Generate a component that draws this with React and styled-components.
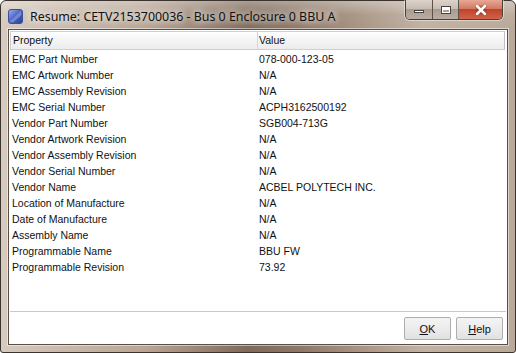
import React from "react";
import styled, { createGlobalStyle } from "styled-components";

const GlobalStyle = createGlobalStyle`
  html, body {
    margin: 0;
    padding: 0;
    background: #ffffff;
  }
  * { box-sizing: border-box; }
`;

const rows = [
  ["EMC Part Number", "078-000-123-05"],
  ["EMC Artwork Number", "N/A"],
  ["EMC Assembly Revision", "N/A"],
  ["EMC Serial Number", "ACPH3162500192"],
  ["Vendor Part Number", "SGB004-713G"],
  ["Vendor Artwork Revision", "N/A"],
  ["Vendor Assembly Revision", "N/A"],
  ["Vendor Serial Number", "N/A"],
  ["Vendor Name", "ACBEL POLYTECH INC."],
  ["Location of Manufacture", "N/A"],
  ["Date of Manufacture", "N/A"],
  ["Assembly Name", "N/A"],
  ["Programmable Name", "BBU FW"],
  ["Programmable Revision", "73.92"],
];

function WindowIcon() {
  return (
    <svg width="15" height="15" viewBox="0 0 15 15">
      <defs>
        <linearGradient id="ig" x1="0" y1="0" x2="1" y2="1">
          <stop offset="0" stopColor="#9fb4ea" />
          <stop offset="0.5" stopColor="#4a63c4" />
          <stop offset="1" stopColor="#2a3f9c" />
        </linearGradient>
      </defs>
      <rect x="0.5" y="0.5" width="14" height="14" rx="2.5" fill="url(#ig)" stroke="#3b4f9a" />
      <path d="M1.5 13 L13 1.8 L13.5 6 L5 13.5 Z" fill="#ffffff" opacity="0.25" />
    </svg>
  );
}

function ScreenDialog() {
  return (
    <Frame>
      <TitleBar>
        <TitleLeft>
          <WindowIcon />
          <Title>Resume: CETV2153700036 - Bus 0 Enclosure 0 BBU A</Title>
        </TitleLeft>
        <Controls>
          <CtlButton $w={27}>
            <MinGlyph />
          </CtlButton>
          <CtlButton $w={26}>
            <MaxGlyph />
          </CtlButton>
          <CloseButton>
            <svg width="12" height="10" viewBox="0 0 12 10">
              <path d="M2 1 L10 9 M10 1 L2 9" stroke="#ffffff" strokeWidth="2.6" strokeLinecap="round" />
            </svg>
          </CloseButton>
        </Controls>
      </TitleBar>
      <Client>
        <TablePane>
          <HeaderRow>
            <HeadCell $first>Property</HeadCell>
            <HeadCell>Value</HeadCell>
          </HeaderRow>
          <Rows>
            {rows.map(([k, v]) => (
              <Row key={k}>
                <Cell $first>{k}</Cell>
                <Cell>{v}</Cell>
              </Row>
            ))}
          </Rows>
        </TablePane>
        <ButtonBar>
          <DlgButton>
            <u>O</u>K
          </DlgButton>
          <DlgButton>
            <u>H</u>elp
          </DlgButton>
        </ButtonBar>
      </Client>
    </Frame>
  );
}

const Frame = styled.div`
  width: 516px;
  height: 353px;
  display: flex;
  flex-direction: column;
  padding: 0 7px 7px 7px;
  border: 1px solid #3b342e;
  border-radius: 6px 6px 3px 3px;
  background:
    linear-gradient(180deg, rgba(255,255,255,0.35) 0px, rgba(255,255,255,0.05) 14px, rgba(0,0,0,0) 28px),
    linear-gradient(90deg, #d6cbc0 0%, #cbbcae 10%, #b8a595 28%, #7e6a5a 48%, #8d7867 58%, #a89585 70%, #c2b2a3 82%, #b9a999 100%);
`;

const TitleBar = styled.div`
  height: 28px;
  display: flex;
  align-items: flex-start;
  justify-content: space-between;
`;

const TitleLeft = styled.div`
  display: flex;
  align-items: center;
  gap: 7px;
  padding-top: 7px;
`;

const Title = styled.span`
  font-family: "Noto Sans", "Open Sans", sans-serif;
  font-size: 12.4px;
  color: #111;
  text-shadow: 0 0 6px rgba(255,255,255,0.95), 0 0 10px rgba(255,255,255,0.8);
  white-space: nowrap;
`;

const Controls = styled.div`
  display: flex;
  margin-top: -1px;
  margin-right: 5px;
  border: 1px solid #4a3f37;
  border-top: none;
  border-radius: 0 0 5px 5px;
  overflow: hidden;
  box-shadow: 0 0 0 1px rgba(255,255,255,0.45);
`;

const CtlButton = styled.div`
  width: ${(p) => p.$w}px;
  height: 19px;
  display: flex;
  align-items: center;
  justify-content: center;
  border-right: 1px solid #5e5249;
  background: linear-gradient(180deg, #dcd3cb 0%, #c8bdb2 45%, #aa9c90 50%, #b9aca0 100%);
`;

const MinGlyph = styled.div`
  width: 10px;
  height: 3px;
  margin-top: 3px;
  background: #fff;
  border: 1px solid #444;
`;

const MaxGlyph = styled.div`
  width: 10px;
  height: 8px;
  background: transparent;
  border: 1px solid #444;
  box-shadow: inset 0 0 0 1px #fff, inset 0 2px 0 1px #fff;
`;

const CloseButton = styled.div`
  width: 43px;
  height: 19px;
  display: flex;
  align-items: center;
  justify-content: center;
  background: linear-gradient(180deg, #e8a796 0%, #d27a63 45%, #c0432a 50%, #d0634a 100%);
  svg path { filter: drop-shadow(0 0 1px #6a1a0a); }
`;

const Client = styled.div`
  flex: 1;
  display: flex;
  flex-direction: column;
  background: #ffffff;
  border: 1px solid #5a4f46;
  box-shadow: 0 0 0 1px rgba(255,255,255,0.5);
`;

const TablePane = styled.div`
  height: 281px;
  display: flex;
  flex-direction: column;
  margin: 1px 1px 0 1px;
  border-bottom: 1px solid #c9c9c9;
`;

const HeaderRow = styled.div`
  display: flex;
  height: 19px;
  margin-right: 1px;
  border: 1px solid #cfcfcf;
  border-right-color: #bdbdbd;
  background: linear-gradient(180deg, #ffffff 0%, #f4f4f4 50%, #ececec 100%);
`;

const HeadCell = styled.div`
  display: flex;
  align-items: center;
  padding-bottom: 1px;
  width: ${(p) => (p.$first ? "247px" : "auto")};
  flex: ${(p) => (p.$first ? "none" : "1")};
  padding-left: ${(p) => (p.$first ? "2px" : "1px")};
  border-right: ${(p) => (p.$first ? "1px solid #d5d5d5" : "none")};
  font-family: "Liberation Sans", Arial, sans-serif;
  font-size: 10.5px;
  color: #111;
`;

const Rows = styled.div`
  display: flex;
  flex-direction: column;
  padding-top: 1px;
`;

const Row = styled.div`
  display: flex;
  height: 16px;
  align-items: center;
`;

const Cell = styled.div`
  width: ${(p) => (p.$first ? "247px" : "auto")};
  flex: ${(p) => (p.$first ? "none" : "1")};
  padding-left: 2px;
  font-family: "Liberation Sans", Arial, sans-serif;
  font-size: 10.5px;
  color: #111;
  white-space: nowrap;
`;

const ButtonBar = styled.div`
  flex: 1;
  display: flex;
  justify-content: flex-end;
  align-items: flex-start;
  gap: 5px;
  padding: 5px 4px 0 0;
`;

const DlgButton = styled.button`
  width: 47px;
  height: 23px;
  padding: 0;
  border: 1px solid #adadad;
  border-radius: 2px;
  background: linear-gradient(180deg, #f4f4f4 0%, #ececec 50%, #e1e1e1 100%);
  font-family: "Liberation Sans", Arial, sans-serif;
  font-size: 11px;
  color: #111;
  u { text-decoration: underline; text-underline-offset: 1px; }
`;

export default function App() {
  return (
    <>
      <GlobalStyle />
      <ScreenDialog />
    </>
  );
}
